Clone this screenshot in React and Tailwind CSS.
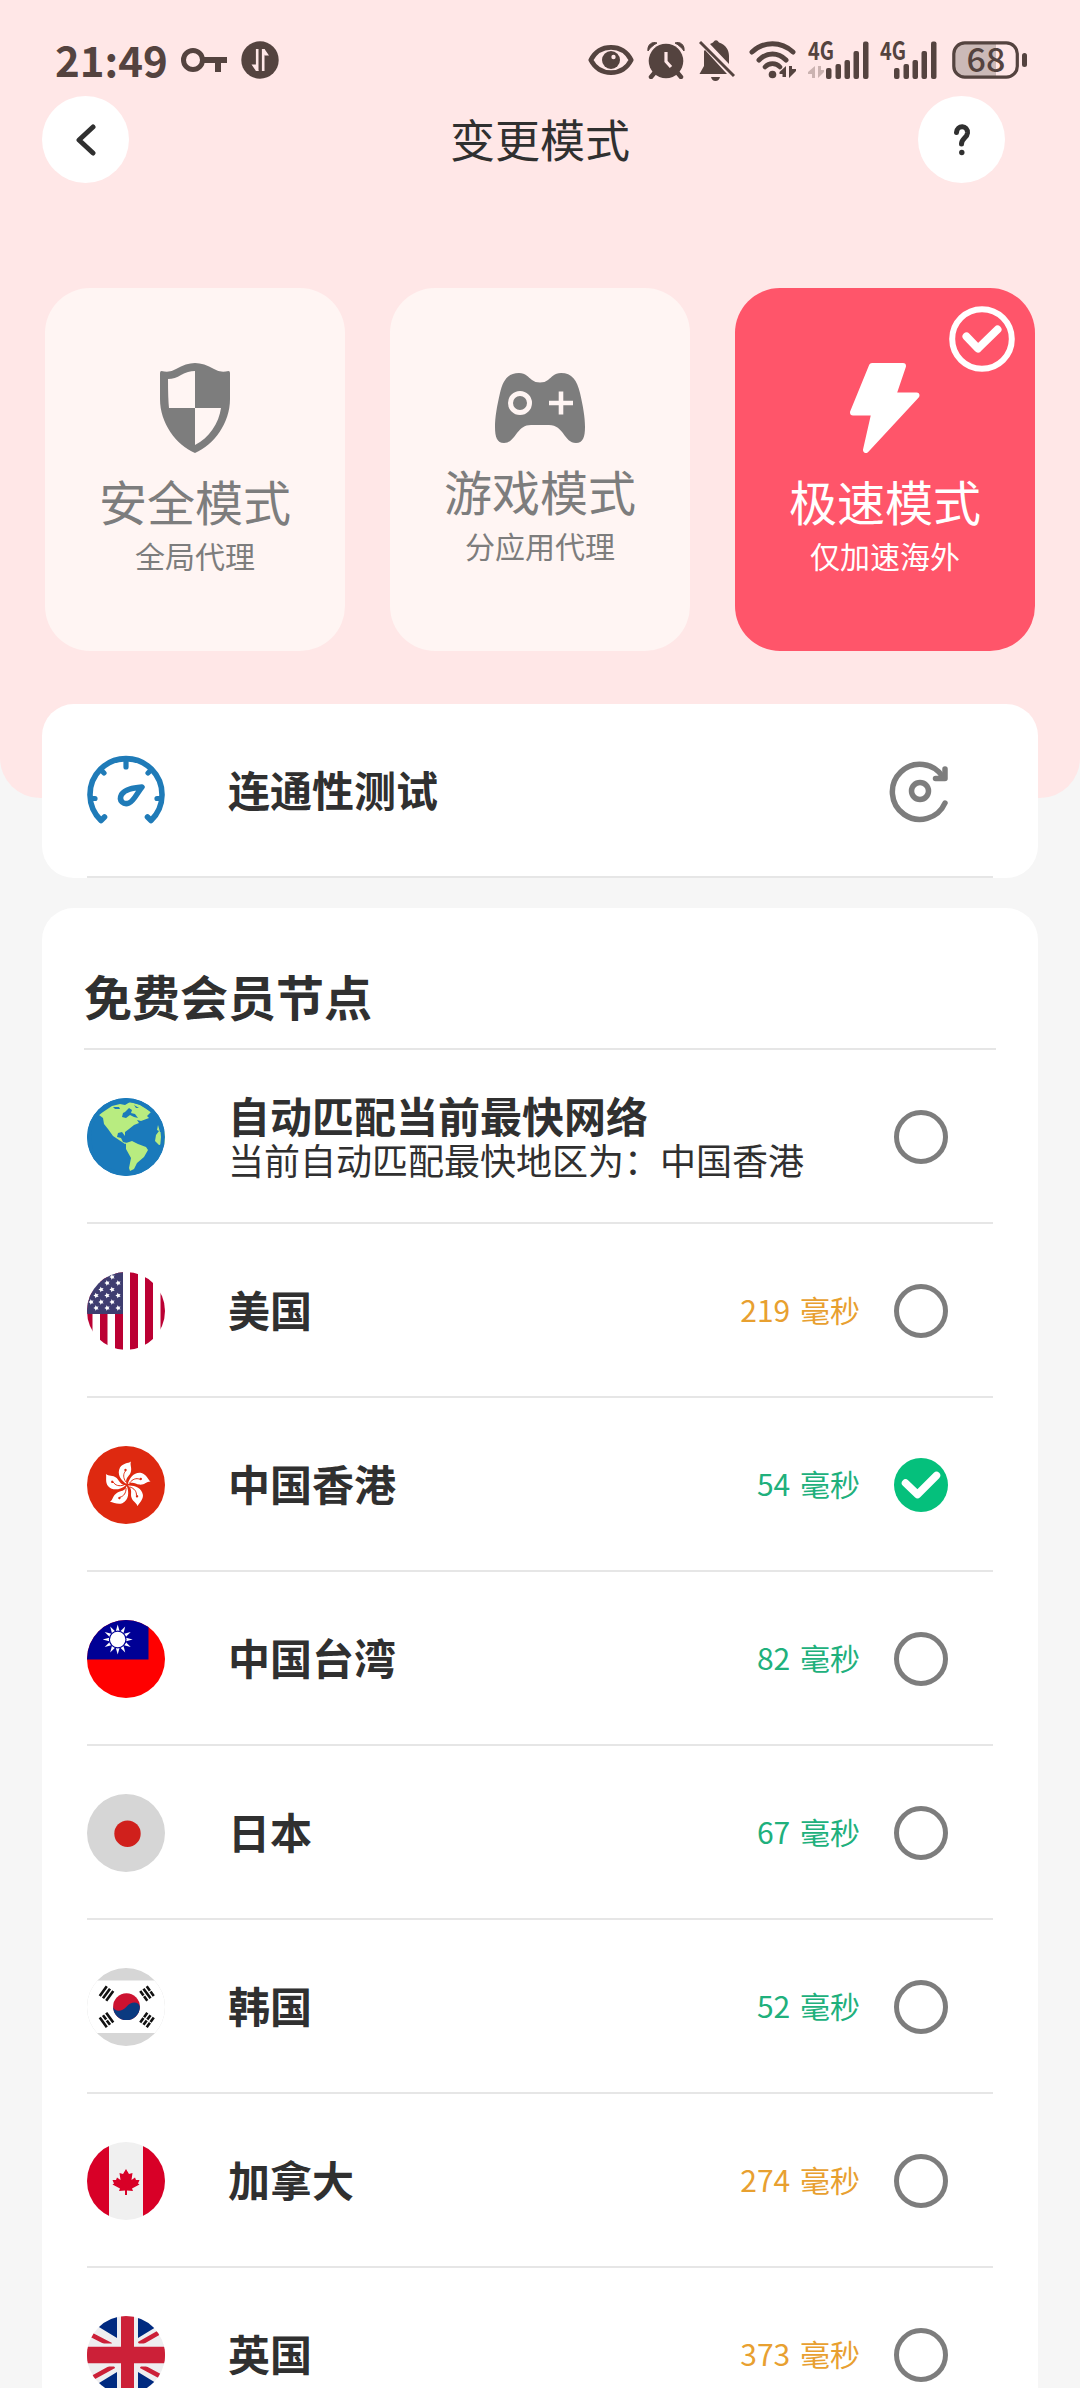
import { useState } from "react";

const INK = "#54433f";

/* STATUS BAR ICONS */
function KeyIcon() {
    return (
        <svg width="46" height="26" viewBox="0 0 46 26" fill="none">
            <circle cx="12" cy="13" r="9.5" stroke={INK} strokeWidth="5" />
            <path d="M22 13H46M37 13V25" stroke={INK} strokeWidth="6" />
        </svg>
    );
}

function TransferIcon() {
    return (
        <svg width="38" height="38" viewBox="0 0 38 38">
            <circle cx="19" cy="19" r="18.7" fill={INK} />
            <path d="M16.2 8V30M22.2 30V8" stroke="#ffe7e7" strokeWidth="2.6" />
            <path d="M17.5 30H15L10.5 23.5H15M21 8H23.5L28 14.5H23.5" fill="#ffe7e7" />
        </svg>
    );
}

function EyeIcon() {
    return (
        <svg width="46" height="32" viewBox="0 0 46 32" fill="none">
            <path d="M2.8 16C7 8 14.5 3.4 23 3.4S39 8 43.2 16C39 24 31.5 28.6 23 28.6S7 24 2.8 16Z" stroke={INK} strokeWidth="4.8" strokeLinejoin="round" />
            <circle cx="23" cy="16" r="9" fill={INK} />
            <circle cx="25.5" cy="13" r="2.2" fill="#ffe7e7" />
        </svg>
    );
}

function AlarmIcon() {
    return (
        <svg width="38" height="38" viewBox="0 0 38 38" fill="none">
            <path d="M9 30L4 36M29 30L34 36" stroke={INK} strokeWidth="4.5" strokeLinecap="round" />
            <circle cx="19" cy="20" r="17.3" fill={INK} />
            <path d="M1 10C0 4 5 0 10 2C6 4 3 7 1 10ZM37 10C38 4 33 0 28 2C32 4 35 7 37 10Z" fill={INK} stroke={INK} strokeLinejoin="round" />
            <path d="M19 11V20.5L24 26" stroke="#ffe7e7" strokeWidth="3.2" />
        </svg>
    );
}

function BellOffIcon() {
    return (
        <svg width="36" height="42" viewBox="0 0 36 42">
            <path d="M5 12V27L0.5 35H28L6 11Z" fill={INK} />
            <path d="M11 5L14 3.5Q17 -1 20 3.5C27 6 30 11 30 17V25Z" fill={INK} />
            <path d="M12 38H21Q20 42 16.5 42T12 38Z" fill={INK} />
            <path d="M1 3L35 37" stroke={INK} strokeWidth="3" />
        </svg>
    );
}

function WifiIcon() {
    return (
        <svg width="48" height="38" viewBox="0 0 48 38" fill="none">
            <path d="M3 11C15 0 32 0 44 11" stroke={INK} strokeWidth="5" strokeLinecap="round" />
            <path d="M10 19C18 11 29 11 37 19" stroke={INK} strokeWidth="5" strokeLinecap="round" />
            <path d="M16 26C20 21.5 27 21.5 31 26" stroke={INK} strokeWidth="4.6" strokeLinecap="round" />
            <circle cx="23.5" cy="33.5" r="3.8" fill={INK} />
            <path d="M37 25V36H33.5V33H30.5V31ZM40 25H43V28H47V30L40 37Z" fill={INK} />
        </svg>
    );
}

function SignalIcon({ data }) {
    return (
        <svg className="overflow-visible" width={data ? 62 : 58} height="38" viewBox={data ? "0 0 62 38" : "4 0 58 38"}>
            <text x={data ? 1 : 5} y="19" fontSize="25" fontWeight="700" textLength="26" lengthAdjust="spacingAndGlyphs" fontFamily="Noto Sans CJK SC, sans-serif" fill={INK}>4G</text>
            {data && <path d="M8 25V37H5V33H1V31ZM11 25H14V29H17V31L11 37Z" fill="#cbb3b1" />}
            <g fill={INK}>
                <rect x="19" y="27" width="5.5" height="11" rx="2" />
                <rect x="28.5" y="23" width="5.5" height="15" rx="2" />
                <rect x="37.5" y="19" width="5.5" height="19" rx="2" />
                <rect x="46.5" y="10" width="5.5" height="28" rx="2" />
                <rect x="56" y="0.5" width="5.5" height="37.5" rx="2" />
            </g>
        </svg>
    );
}

function BatteryIcon({ level }) {
    return (
        <svg className="overflow-visible" width="76" height="38" viewBox="0 0 76 38">
            <path d="M13 2H44V36H13Q2 36 2 25V13Q2 2 13 2Z" fill="#cbb9b7" />
            <rect x="1.8" y="1.8" width="63.5" height="34.4" rx="11" fill="none" stroke={INK} strokeWidth="3.2" />
            <rect x="70" y="12" width="5" height="14" rx="2.5" fill={INK} />
            <text x="34" y="31" textAnchor="middle" fontSize="34" fontWeight="500" fontFamily="Noto Sans CJK SC, sans-serif" fill={INK}>{level}</text>
        </svg>
    );
}

/* MODE ICONS */
function ShieldIcon() {
    return (
        <svg width="70" height="90" viewBox="0 0 70 90">
            <path d="M1.5 8Q10 10 16 6Q26 0 35 0T54 6Q60 10 68.5 8Q70 8 70 10V36C70 60 54 82 35 90C16 82 0 60 0 36V10Q0 8 1.5 8Z" fill="#7d7d7d" />
            <path d="M35 8V45H9Q8 36 8 16Q15 16 21 12Q28 8 35 8ZM35 45H61C59 60 49 75 35 82Z" fill="#fff5f3" />
        </svg>
    );
}

function GamepadIcon() {
    return (
        <svg width="90" height="70" viewBox="0 0 90 70">
            <path d="M24 0C31 0 33 4 37 7Q40 9.5 45 9.5T53 7C57 4 59 0 66 0C77 0 82 7 85 20C88 33 90 44 90 54C90 64 88 70 81 70C69 70 69 52 54 52H36C21 52 21 70 9 70C2 70 0 64 0 54C0 44 2 33 5 20C8 7 13 0 24 0Z" fill="#7d7d7d" />
            <circle cx="25" cy="30" r="9.5" fill="none" stroke="#fff5f3" strokeWidth="5" />
            <path d="M66 18.5V41.5M54 30H78" stroke="#fff5f3" strokeWidth="4.6" />
        </svg>
    );
}

function BoltIcon() {
    return (
        <svg width="70" height="90" viewBox="0 0 70 90">
            <path d="M22 3H53L43 32.5H66.5L16 87L24.5 49.5H3Z" fill="#fff" stroke="#fff" strokeWidth="6" strokeLinejoin="round" />
        </svg>
    );
}

function SelectedBadge() {
    return (
        <svg className="absolute top-[18px] right-5" width="66" height="66" viewBox="0 0 66 66" fill="none" stroke="#fff">
            <circle cx="33" cy="33" r="29.8" strokeWidth="6" />
            <path d="M17.5 30.5L29 42.5L48.5 23.5" strokeWidth="8" strokeLinecap="round" strokeLinejoin="round" />
        </svg>
    );
}

function GaugeIcon() {
    return (
        <svg width="78" height="78" viewBox="0 0 78 78" fill="none" stroke="#1f7bb8" strokeLinecap="round" strokeLinejoin="round">
            <path d="M17.5 65L14 68.5A36 36 0 1 1 64 68.5L60.5 65" strokeWidth="5.6" />
            <path d="M39 9V15M14 18L17 21M64 18L61 21M4 46.500H8M74 46.500H70" strokeWidth="5.2" />
            <path d="M55 35C46 36 38 37 34.5 42.5C31 49 37 53 42 51C47 49 50 41 55 35Z" strokeWidth="5.5" />
        </svg>
    );
}

function RefreshIcon() {
    return (
        <svg className="overflow-visible" width="60" height="60" viewBox="0 0 60 60" fill="none" stroke="#7d7d7d" strokeWidth="5.5" strokeLinecap="round" strokeLinejoin="round">
            <path d="M56 42A27.500 27.500 0 1 1 54 16" />
            <path d="M56 8V17.500H46.500" />
            <circle cx="31" cy="30" r="8.500" />
        </svg>
    );
}

/* FLAGS, all drawn on a 78 x 78 disc */
function Globe() {
    return (
        <>
            <rect width="78" height="78" fill="#1a7abb" />
            <path d="M12 17L16 14L25 8L33 6L38 7L43 4L53 7L64 14L60 18L62 20L54 23L50 22L52 25L47 27L42 31L38 34L38 38L35 34L31 35L30 39L34 40L36 44L40 45L38 46L32 42L26 38L21 31L17 26L16 20Z" fill="#b8ec80" />
            <path d="M38 14L42 10L45 12L44 15L48 16L51 20L47 19L43 17L39 20L35 19L36 15ZM26 9L32 9L33 11L28 11ZM47 7L52 10L49 10Z" fill="#1a7abb" />
            <path d="M39 45L45 43L51 46L59 49L61 52L57 59L50 65L47 71L43 73L42 70L44 60L39 51Z" fill="#b8ec80" />
            <path d="M71 27L70 32L72 33L69 37L68 43L72 47L78 46V34H73Z" fill="#b8ec80" />
            <circle cx="39" cy="39" r="37" fill="none" stroke="#1a7abb" strokeWidth="4" />
        </>
    );
}

const STARS = [
    [25, 5], [20, 11], [31, 11], [14, 17.5], [25, 17.5], [9, 23.5], [20, 23.5], [31, 23.5],
    [4, 30], [14, 30], [25, 30], [9, 36], [20, 36], [31, 36],
];

function UsFlag() {
    return (
        <>
            <rect width="78" height="78" fill="#fff" />
            <path d="M0 0H5.500V78H0ZM13 0H20.500V78H13ZM28 0H36V78H28ZM43 0H51V78H43ZM58 0H66V78H58ZM73.500 0H78V78H73.500Z" fill="#bb0033" />
            <rect width="36" height="42" fill="#3f3d70" />
            {STARS.map(([x, y]) => (
                <path key={`${x}-${y}`} transform={`translate(${x} ${y})`} d="M-2.600 0L-.9 -.9L-.6 -2.700L.8 -1.200L2.600 -1.500L1.600 0L2.600 1.500L.8 1.200L-.6 2.700L-.9 .9Z" fill="#fff" />
            ))}
        </>
    );
}

function HkFlag() {
    return (
        <>
            <rect width="78" height="78" fill="#de2910" />
            {[0, 72, 144, 216, 288].map((deg) => (
                <g key={deg} transform={`rotate(${deg} 40 39)`}>
                    <path d="M39.500 38C34 34.500 29.500 28 33 21.500C36 17 41 17.500 44 15.500C42.500 19 45.500 22 43.500 27C41.500 31 38 32 39.500 38Z" fill="#fff" />
                    <path d="M39 36C36 32 36 28 38.500 25" fill="none" stroke="#de2910" strokeWidth="0.900" />
                    <circle cx="38.500" cy="24" r="1.200" fill="#de2910" />
                </g>
            ))}
        </>
    );
}

function TwFlag() {
    return (
        <>
            <rect width="78" height="78" fill="#ff0000" />
            <rect width="61.500" height="39.500" fill="#000095" />
            {[0, 30, 60, 90, 120, 150, 180, 210, 240, 270, 300, 330].map((deg) => (
                <path key={deg} transform={`rotate(${deg} 30.700 19.500)`} d="M30.700 4.500L32.800 12H28.600Z" fill="#fff" />
            ))}
            <circle cx="30.700" cy="19.500" r="8.300" fill="#fff" stroke="#000095" strokeWidth="1.200" />
        </>
    );
}

function JpFlag() {
    return (
        <>
            <rect width="78" height="78" fill="#d6d6d6" />
            <circle cx="40.500" cy="39.700" r="13.200" fill="#d0201c" />
        </>
    );
}

function KrFlag() {
    return (
        <>
            <rect width="78" height="78" fill="#d6d6d6" />
            <rect y="12.500" width="78" height="52.500" fill="#fff" />
            <circle cx="39.500" cy="38.700" r="13.400" fill="#cd1230" />
            <path d="M26.100 38.700C27.500 43.500 34.500 44.500 39.500 38.700S51.500 33.500 52.900 38.700A13.400 13.400 0 0 1 26.100 38.700Z" fill="#0b3a80" />
            <g stroke="#111" strokeWidth="2.600">
                <path transform="translate(19.500 25.500) rotate(-54)" d="M-6 -4H6M-6 0H6M-6 4H6" />
                <path transform="translate(60 25.500) rotate(54)" d="M-6 -4H-.5M.5 -4H6M-6 0H6M-6 4H-.5M.5 4H6" />
                <path transform="translate(19.500 52) rotate(54)" d="M-6 -4H6M-6 0H-.5M.5 0H6M-6 4H6" />
                <path transform="translate(60 52) rotate(-54)" d="M-6 -4H-.5M.5 -4H6M-6 0H-.5M.5 0H6M-6 4H-.5M.5 4H6" />
            </g>
        </>
    );
}

function CaFlag() {
    return (
        <>
            <rect width="78" height="78" fill="#f0f0f0" />
            <path d="M0 0H22V78H0ZM56 0H78V78H56Z" fill="#d80027" />
            <path d="M39 27L42 32L45.500 31L44.500 38L48 35.500L49 38L52.500 38L51 41.500L52.500 42.500L45 46.500L46 49L40 48.500V53H38V48.500L32 49L33 46.500L25.500 42.500L27 41.500L25.500 38L29 38L30 35.500L33.500 38L32.500 31L36 32Z" fill="#d80027" />
        </>
    );
}

function GbFlag() {
    return (
        <>
            <rect width="78" height="78" fill="#eeeef0" />
            <path d="M30 22L-6 0H30ZM51 22L87 0H51ZM30 56L-6 78H30ZM51 56L87 78H51Z" fill="#002a80" />
            <path d="M-2 15.500L24 29M80 12L52 28M-2 66L27 50M80 64L54 50" stroke="#cc2038" strokeWidth="4.600" />
            <path d="M0 39H78" stroke="#eeeef0" strokeWidth="23" />
            <path d="M40.500 0V78M0 39H78" stroke="#cc2038" strokeWidth="13" />
            <path d="M0 39H78" stroke="#cc2038" strokeWidth="16.500" />
        </>
    );
}

const modes = [
    { id: "safe", title: "安全模式", desc: "全局代理", Icon: ShieldIcon },
    { id: "game", title: "游戏模式", desc: "分应用代理", Icon: GamepadIcon },
    { id: "fast", title: "极速模式", desc: "仅加速海外", Icon: BoltIcon },
];

const nodes = [
    { id: "auto", name: "自动匹配当前最快网络", desc: "当前自动匹配最快地区为：中国香港", Flag: Globe },
    { id: "us", name: "美国", ping: 219, Flag: UsFlag },
    { id: "hk", name: "中国香港", ping: 54, Flag: HkFlag },
    { id: "tw", name: "中国台湾", ping: 82, Flag: TwFlag },
    { id: "jp", name: "日本", ping: 67, Flag: JpFlag },
    { id: "kr", name: "韩国", ping: 52, Flag: KrFlag },
    { id: "ca", name: "加拿大", ping: 274, Flag: CaFlag },
    { id: "gb", name: "英国", ping: 373, Flag: GbFlag },
];

function Radio({ checked }) {
    if (!checked) {
        return <span className="size-[54px] shrink-0 rounded-full border-[5px] border-[#7d7d7d]" />;
    }
    return (
        <svg className="shrink-0" width="54" height="54" viewBox="0 0 54 54" fill="none">
            <circle cx="27" cy="27" r="27" fill="#05c07c" />
            <path d="M11.500 25L23.500 36.500L42.500 17.500" stroke="#fff" strokeWidth="7.500" strokeLinecap="round" strokeLinejoin="round" />
        </svg>
    );
}

export default function App() {
    const [mode, setMode] = useState("fast");
    const [selected, setSelected] = useState("hk");

    return (
        <div className="h-[2388px] w-[1080px] overflow-hidden bg-[#f6f6f6] font-['Noto_Sans_CJK_SC',sans-serif] text-[#303030]">

            {/* HEADER */}
            <header className="h-[798px] rounded-b-[40px] bg-[#ffe7e7]">
                <div className="flex h-24 items-center pt-[23px] pl-[55px]">
                    <span className="w-[126px] pb-[2px] text-[42px] leading-none font-bold whitespace-nowrap text-[#54433f]">21:49</span>
                    <KeyIcon />
                    <div className="ml-[14px]"><TransferIcon /></div>
                    <div className="ml-[309px] flex items-center">
                        <EyeIcon />
                        <div className="ml-[13px]"><AlarmIcon /></div>
                        <div className="ml-[14px]"><BellOffIcon /></div>
                        <div className="ml-[14px]"><WifiIcon /></div>
                        <div className="ml-[10px]"><SignalIcon data /></div>
                        <div className="ml-[10px]"><SignalIcon /></div>
                        <div className="ml-[15px]"><BatteryIcon level={68} /></div>
                    </div>
                </div>

                <div className="flex items-center pr-[75px] pl-[42px]">
                    <button className="flex size-[87px] items-center justify-center rounded-full bg-white">
                        <svg width="20" height="32" viewBox="0 0 20 32" fill="none">
                            <path d="M17 3L3 16L17 29" stroke="#303030" strokeWidth="5" strokeLinecap="round" strokeLinejoin="round" />
                        </svg>
                    </button>
                    <h1 className="flex-1 pb-[3px] pl-[33px] text-center text-[45px] leading-none">变更模式</h1>
                    <button className="flex size-[87px] items-center justify-center rounded-full bg-white">
                        <svg width="18" height="32" viewBox="0 0 18 32" fill="none">
                            <path d="M3.500 8.500C4 0.500 15 1 14.500 9C14 14 8.500 14.500 8.500 20" stroke="#303030" strokeWidth="5" strokeLinecap="round" />
                            <circle cx="8.800" cy="28.500" r="2.700" fill="#303030" />
                        </svg>
                    </button>
                </div>

                <div className="mt-[105px] flex gap-[45px] px-[45px]">
                    {modes.map(({ id, title, desc, Icon }) => (
                        <button
                            key={id}
                            onClick={() => setMode(id)}
                            className={`relative flex h-[363px] flex-1 flex-col items-center justify-center rounded-[45px] ${
                                id === mode ? "bg-[#ff556a] text-white" : "bg-[#fff5f3] text-[#7d7d7d]"
                            }`}
                        >
                            {id === mode && <SelectedBadge />}
                            <Icon />
                            <span className="mt-[12px] text-[48px] leading-[71px]">{title}</span>
                            <span className="pb-[3px] text-[30px] leading-[38px]">{desc}</span>
                        </button>
                    ))}
                </div>
            </header>

            <main className="relative -mt-[94px] px-[42px]">
                {/* CONNECTIVITY TEST */}
                <section className="rounded-[32px] bg-white px-[45px]">
                    <div className="flex h-[174px] items-center border-b-2 border-[#e6e6e6] pt-[2px] pr-[44px]">
                        <GaugeIcon />
                        <span className="ml-[63px] flex-1 pb-[4px] text-[42px] leading-none font-bold">连通性测试</span>
                        <RefreshIcon />
                    </div>
                </section>

                {/* NODE LIST */}
                <section className="mt-[30px] rounded-t-[32px] bg-white px-[42px]">
                    <h2 className="flex h-[142px] items-center border-b-2 border-[#e6e6e6] pt-[34px] text-[48px] leading-none font-bold">免费会员节点</h2>
                    <ul className="px-[3px]">
                        {nodes.map(({ id, name, desc, ping, Flag }) => (
                            <li
                                key={id}
                                onClick={() => setSelected(id)}
                                className="flex h-[174px] items-center border-b-2 border-[#e6e6e6] pt-[2px] pr-[45px]"
                            >
                                <svg className="shrink-0 rounded-full" width="78" height="78" viewBox="0 0 78 78">
                                    <Flag />
                                </svg>
                                <div className={`ml-[63px] flex-1 whitespace-nowrap ${desc ? "" : "pb-[4px]"}`}>
                                    <p className="text-[42px] leading-[44px] font-bold">{name}</p>
                                    {desc && <p className="text-[36px] leading-[44px]">{desc}</p>}
                                </div>
                                {ping && (
                                    <span className={`mr-[34px] pb-[4px] text-[30px] leading-none [word-spacing:3px] ${ping > 200 ? "text-[#e8a030]" : "text-[#20b07c]"}`}>
                                        {ping} 毫秒
                                    </span>
                                )}
                                <Radio checked={id === selected} />
                            </li>
                        ))}
                    </ul>
                </section>
            </main>
        </div>
    );
}
